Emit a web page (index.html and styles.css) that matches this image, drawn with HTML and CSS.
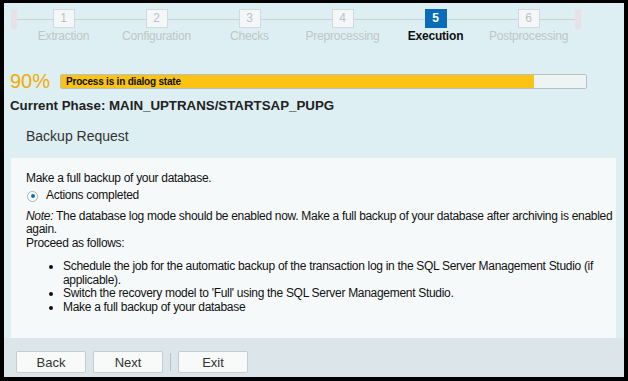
FILE: index.html
```html
<!DOCTYPE html>
<html lang="en">
<head>
  <meta charset="UTF-8" />
  <title>Software Update Manager - Execution</title>
  <link rel="stylesheet" href="styles.css">
</head>
<body>
  <div class="screen">
    <div class="stepper">
      <div class="stub"></div>
      <ol class="steps">
        <li class="step"><span class="num">1</span><span class="label">Extraction</span></li>
        <li class="step"><span class="num">2</span><span class="label">Configuration</span></li>
        <li class="step"><span class="num">3</span><span class="label">Checks</span></li>
        <li class="step"><span class="num">4</span><span class="label">Preprocessing</span></li>
        <li class="step active"><span class="num">5</span><span class="label">Execution</span></li>
        <li class="step"><span class="num">6</span><span class="label">Postprocessing</span></li>
      </ol>
      <div class="stub"></div>
    </div>

    <div class="progress-row">
      <span class="percent">90%</span>
      <div class="bar">
        <div class="fill" style="width: 90%"></div>
        <span class="bar-text">Process is in dialog state</span>
      </div>
    </div>
    <div class="phase">Current Phase: MAIN_UPTRANS/STARTSAP_PUPG</div>

    <div class="panel-title">Backup Request</div>
    <div class="panel">
      <p>Make a full backup of your database.</p>
      <label class="radio">
        <span class="dot"></span>
        Actions completed
      </label>
      <p class="note"><em>Note:</em> The database log mode should be enabled now. Make a full backup of your database after archiving is enabled again.</p>
      <p>Proceed as follows:</p>
      <ul>
        <li>Schedule the job for the automatic backup of the transaction log in the SQL Server Management Studio (if applicable).</li>
        <li>Switch the recovery model to 'Full' using the SQL Server Management Studio.</li>
        <li>Make a full backup of your database</li>
      </ul>
    </div>

    <div class="footer">
      <button>Back</button>
      <button>Next</button>
      <span class="sep"></span>
      <button>Exit</button>
    </div>
  </div>
</body>
</html>
```

FILE: styles.css
```css
body {
  margin: 0;
  background: #000;
  font-family: 'Liberation Sans', Arial, sans-serif;
  color: #222;
}
.screen {
  width: 620px;
  height: 374px;
  margin: 3px 4px 4px 4px;
  background: #ddeff2;
  display: flex;
  flex-direction: column;
  overflow: hidden;
}

/* stepper */
.stepper {
  display: flex;
  align-items: flex-start;
  height: 48px;
  padding: 6px 0 0 7px;
}
.stub {
  width: 6px;
  height: 20px;
  background: #e6e2e6;
  flex: none;
}
.steps {
  display: flex;
  margin: 0;
  padding: 0;
  list-style: none;
  position: relative;
}
.steps::before {
  content: '';
  position: absolute;
  left: 0;
  right: 0;
  top: 10px;
  height: 1px;
  background: #cbd2d6;
}
.step {
  width: 93px;
  display: flex;
  flex-direction: column;
  align-items: center;
  position: relative;
}
.num {
  width: 20px;
  height: 17px;
  border: 1px solid #d3d9dc;
  background: #f4f7f8;
  color: #bcc1c4;
  font-size: 12px;
  line-height: 17px;
  text-align: center;
}
.label {
  font-size: 12px;
  letter-spacing: -0.2px;
  color: #bec6c9;
  margin-top: 1px;
}
.step.active .num {
  background: #0a6cb8;
  border-color: #0a6cb8;
  color: #fff;
  font-weight: bold;
}
.step.active .label {
  color: #111;
  font-weight: bold;
}

/* progress */
.progress-row {
  display: flex;
  align-items: center;
  padding: 13px 0 0 6px;
  height: 22px;
}
.percent {
  font-size: 20px;
  color: #f0ab00;
  width: 50px;
}
.bar {
  position: relative;
  width: 525px;
  height: 13px;
  border: 1px solid #b7c1c5;
  border-radius: 2px;
  background: #eef4f5;
}
.fill {
  height: 100%;
  background: #fbc313;
}
.bar-text {
  position: absolute;
  left: 5px;
  top: 0;
  font-size: 10px;
  letter-spacing: -0.2px;
  line-height: 13px;
  font-weight: bold;
  color: #111;
}
.phase {
  font-size: 13.3px;
  font-weight: bold;
  color: #222;
  padding: 6px 0 0 6px;
  height: 16px;
}

/* panel */
.panel-title {
  font-size: 14px;
  color: #333;
  padding: 14px 0 0 22px;
  height: 29px;
}
.panel {
  margin: 0 8px 0 7px;
  padding: 14px 0 0 15px;
  background: #f6f9fa;
  border-top: 1px solid #e4ecee;
  height: 166px;
  font-size: 12px;
  letter-spacing: -0.3px;
  line-height: 13.4px;
  color: #111;
}
.panel p {
  margin: 0;
}
.radio {
  display: flex;
  align-items: center;
  gap: 8px;
  margin: 4px 0 7px 1px;
}
.dot {
  width: 9px;
  height: 9px;
  border: 1px solid #a8b0b4;
  border-radius: 50%;
  background: #fff;
  display: flex;
  align-items: center;
  justify-content: center;
}
.dot::after {
  content: '';
  width: 4px;
  height: 4px;
  border-radius: 50%;
  background: #0a6cb8;
}
.panel ul {
  margin: 10px 0 0 0;
  padding-left: 37px;
  line-height: 13.5px;
}

/* footer */
.footer {
  flex: 1;
  background: #dce5ea;
  display: flex;
  align-items: center;
  gap: 7px;
  padding: 9px 0 0 12px;
}
.footer button {
  width: 70px;
  height: 22px;
  border: 1px solid #c5ccd0;
  border-radius: 2px;
  background: #f8f9f9;
  font-family: inherit;
  font-size: 13px;
  color: #333;
}
.sep {
  width: 1px;
  height: 18px;
  background: #b8c0c4;
}
```
